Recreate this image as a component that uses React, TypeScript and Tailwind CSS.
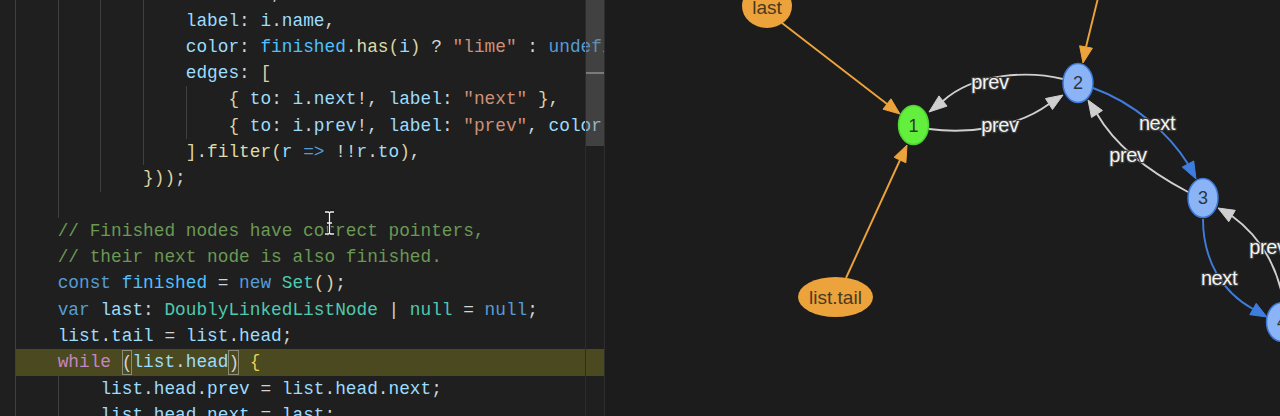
import React from 'react';

type Tok = [string, string];
type Line = { indent: number; guides: number[]; toks: Tok[]; hl?: boolean };

const P = 'text-[#9cdcfe]';
const K = 'text-[#569cd6]';
const S = 'text-[#ce9178]';
const F = 'text-[#dcdcaa]';
const T = 'text-[#4ec9b0]';
const C = 'text-[#6a9955]';
const V = 'text-[#4fc1ff]';
const D = 'text-[#d4d4d4]';
const W = 'text-[#c586c0]';
const B = 'text-[#ddd2a0]';
const Y = 'text-[#e6cf55]';
const BM = 'text-[#d4d4d4] my-px shadow-[inset_0_0_0_1px_#8d8c74]';

const lines: Line[] = [
  { indent: 4, guides: [0, 1, 2, 3], toks: [['id', P], [': ', D], ['i', P], ['.', D], ['id', P], [',', D]] },
  { indent: 4, guides: [0, 1, 2, 3], toks: [['label', P], [': ', D], ['i', P], ['.', D], ['name', P], [',', D]] },
  {
    indent: 4, guides: [0, 1, 2, 3],
    toks: [['color', P], [': ', D], ['finished', V], ['.', D], ['has', F], ['(', B], ['i', P], [')', B], [' ? ', D], ['"lime"', S], [' : ', D], ['undefined', K], [',', D]],
  },
  { indent: 4, guides: [0, 1, 2, 3], toks: [['edges', P], [': ', D], ['[', B]] },
  {
    indent: 5, guides: [0, 1, 2, 3, 4],
    toks: [['{', B], [' ', D], ['to', P], [': ', D], ['i', P], ['.', D], ['next', P], ['!, ', D], ['label', P], [': ', D], ['"next"', S], [' ', D], ['}', B], [',', D]],
  },
  {
    indent: 5, guides: [0, 1, 2, 3, 4],
    toks: [['{', B], [' ', D], ['to', P], [': ', D], ['i', P], ['.', D], ['prev', P], ['!, ', D], ['label', P], [': ', D], ['"prev"', S], [', ', D], ['color', P], [': ', D], ['"gray"', S], [' }', B]],
  },
  {
    indent: 4, guides: [0, 1, 2, 3],
    toks: [[']', B], ['.', D], ['filter', F], ['(', B], ['r', P], [' => ', K], ['!!', D], ['r', P], ['.', D], ['to', P], [')', B], [',', D]],
  },
  { indent: 3, guides: [0, 1, 2], toks: [['}))', B], [';', D]] },
  { indent: 2, guides: [0, 1], toks: [] },
  { indent: 1, guides: [0], toks: [['// Finished nodes have correct pointers,', C]] },
  { indent: 1, guides: [0], toks: [['// their next node is also finished.', C]] },
  {
    indent: 1, guides: [0],
    toks: [['const', K], [' ', D], ['finished', V], [' = ', D], ['new', K], [' ', D], ['Set', T], ['()', B], [';', D]],
  },
  {
    indent: 1, guides: [0],
    toks: [['var', K], [' ', D], ['last', P], [': ', D], ['DoublyLinkedListNode', T], [' | ', D], ['null', T], [' = ', D], ['null', K], [';', D]],
  },
  { indent: 1, guides: [0], toks: [['list', P], ['.', D], ['tail', P], [' = ', D], ['list', P], ['.', D], ['head', P], [';', D]] },
  {
    indent: 1, guides: [0], hl: true,
    toks: [['while', W], [' ', D], ['(', BM], ['list', P], ['.', D], ['head', P], [')', BM], [' ', D], ['{', Y]],
  },
  {
    indent: 2, guides: [0, 1],
    toks: [['list', P], ['.', D], ['head', P], ['.', D], ['prev', P], [' = ', D], ['list', P], ['.', D], ['head', P], ['.', D], ['next', P], [';', D]],
  },
  { indent: 2, guides: [0, 1], toks: [['list', P], ['.', D], ['head', P], ['.', D], ['next', P], [' = ', D], ['last', P], [';', D]] },
];

function CodeLine({ line }: { line: Line }) {
  return (
    <div className={`flex h-[26.3px] leading-[26.3px] whitespace-pre ${line.hl ? 'bg-[#4a4920]' : ''}`}>
      {Array.from({ length: line.indent }).map((_, i) => (
        <span key={i} className={line.guides.includes(i) ? 'shadow-[inset_1px_0_0_#404040]' : ''}>
          {'    '}
        </span>
      ))}
      {line.toks.map(([txt, cls], i) => (
        <span key={i} className={cls}>
          {txt}
        </span>
      ))}
    </div>
  );
}

function Editor() {
  return (
    <div className="relative w-[605px] shrink-0 overflow-hidden border-r border-[#2e2e2e] bg-[#1f1f1f]">
      <div className="-mt-[18.8px] pl-[15px] font-['Liberation_Mono','DejaVu_Sans_Mono',monospace] text-[17.8px]">
        {lines.map((l, i) => (
          <CodeLine key={i} line={l} />
        ))}
      </div>

      {/* overview ruler + slider */}
      <div className="absolute right-0 top-0 h-full w-[19px] border-l border-[#2c2c2c]">
        <div className="relative h-[146px] bg-[rgba(121,121,121,0.38)]">
          <div className="absolute left-0 right-0 top-[72px] h-[2px] bg-[#7a7a7a]" />
        </div>
      </div>

      {/* mouse I-beam */}
      <svg className="absolute left-[323px] top-[210px]" width="13" height="26" viewBox="0 0 13 26">
        <path d="M2 2h3.5l1 1 1-1H11M6.5 3v20M2 24h3.5l1-1 1 1H11M4 13h5" stroke="#111" strokeWidth="3" fill="none" />
        <path d="M2 2h3.5l1 1 1-1H11M6.5 3v20M2 24h3.5l1-1 1 1H11M4 13h5" stroke="#f4f4f4" strokeWidth="1.3" fill="none" />
      </svg>
    </div>
  );
}

type Pt = [number, number];

function Arrow({ d, base, tip, color }: { d: string; base: Pt; tip: Pt; color: string }) {
  const dx = tip[0] - base[0];
  const dy = tip[1] - base[1];
  const len = Math.hypot(dx, dy);
  const px = (-dy / len) * 6.5;
  const py = (dx / len) * 6.5;
  const pts = `${tip[0]},${tip[1]} ${base[0] + px},${base[1] + py} ${base[0] - px},${base[1] - py}`;
  return (
    <g>
      <path d={d} stroke={color} strokeWidth="1.9" fill="none" />
      <polygon points={pts} fill={color} stroke={color} strokeWidth="1" strokeLinejoin="round" />
    </g>
  );
}

function EdgeLabel({ x, y, text }: { x: number; y: number; text: string }) {
  return (
    <text
      x={x}
      y={y}
      textAnchor="middle"
      dominantBaseline="central"
      fontSize="20"
      letterSpacing="-0.4"
      fill="#f4f4f4"
      stroke="#3a3a3a"
      strokeWidth="2.6"
      paintOrder="stroke"
      strokeLinejoin="round"
    >
      {text}
    </text>
  );
}

function Graph() {
  const orange = '#eda33b';
  const gray = '#cfcfcf';
  const blue = '#3f7ddc';
  return (
    <div className="flex-1 bg-[#1c1c1c]">
      <svg width="675" height="416" viewBox="605 0 675 416" className="block font-['Liberation_Sans',Arial,sans-serif]">
        {/* edges */}
        <Arrow d="M782,23 L887,104" base={[887, 104]} tip={[900, 114]} color={orange} />
        <Arrow d="M846,278 L900,160" base={[900, 160]} tip={[907, 145]} color={orange} />
        <Arrow d="M1098,-2 L1086,47" base={[1086, 47]} tip={[1083, 63]} color={orange} />

        <Arrow d="M1063,79 C1030,71 975,72 943,101" base={[943, 101]} tip={[929, 112]} color={gray} />
        <Arrow d="M929,129 C965,134 1015,129 1049,104" base={[1049, 104]} tip={[1063, 95]} color={gray} />
        <Arrow d="M1093,88 C1135,103 1170,135 1188,164" base={[1188, 164]} tip={[1196, 179]} color={blue} />
        <Arrow d="M1188,192 C1150,172 1115,145 1097,114" base={[1097, 114]} tip={[1088, 100]} color={gray} />
        <Arrow d="M1203,219 C1203,260 1222,292 1253,309" base={[1253, 309]} tip={[1267, 317]} color={blue} />
        <Arrow d="M1284,304 C1278,268 1262,238 1232,216" base={[1232, 216]} tip={[1218, 208]} color={gray} />

        {/* nodes */}
        <ellipse cx="767" cy="6" rx="25" ry="22" fill={orange} />
        <text x="767" y="7" textAnchor="middle" dominantBaseline="central" fontSize="19" fill="#4a3a1e">last</text>

        <ellipse cx="835.5" cy="297" rx="37.5" ry="20" fill={orange} />
        <text x="835.5" y="297" textAnchor="middle" dominantBaseline="central" fontSize="19" fill="#4a3a1e">list.tail</text>

        <ellipse cx="913.5" cy="125" rx="15" ry="19.5" fill="#62ef3d" stroke="#4fd32f" strokeWidth="1.5" />
        <text x="913.5" y="126" textAnchor="middle" dominantBaseline="central" fontSize="18" fill="#2f3a2a">1</text>

        <ellipse cx="1078" cy="83" rx="15" ry="19.5" fill="#8ab4f6" stroke="#3c78d6" strokeWidth="1.5" />
        <text x="1078" y="83" textAnchor="middle" dominantBaseline="central" fontSize="18" fill="#2e3440">2</text>

        <ellipse cx="1203" cy="198" rx="15" ry="19.5" fill="#8ab4f6" stroke="#3c78d6" strokeWidth="1.5" />
        <text x="1203" y="198" textAnchor="middle" dominantBaseline="central" fontSize="18" fill="#2e3440">3</text>

        <ellipse cx="1282" cy="322" rx="15.5" ry="19.5" fill="#8ab4f6" stroke="#3c78d6" strokeWidth="1.5" />
        <text x="1282" y="322" textAnchor="middle" dominantBaseline="central" fontSize="18" fill="#2e3440">4</text>

        {/* edge labels */}
        <EdgeLabel x={990} y={82} text="prev" />
        <EdgeLabel x={1000} y={125} text="prev" />
        <EdgeLabel x={1157} y={123} text="next" />
        <EdgeLabel x={1128} y={155} text="prev" />
        <EdgeLabel x={1219} y={278} text="next" />
        <EdgeLabel x={1268} y={247} text="prev" />
      </svg>
    </div>
  );
}

export default function App() {
  return (
    <div className="flex h-[416px] w-[1280px] overflow-hidden bg-[#1c1c1c]">
      <Editor />
      <Graph />
    </div>
  );
}
